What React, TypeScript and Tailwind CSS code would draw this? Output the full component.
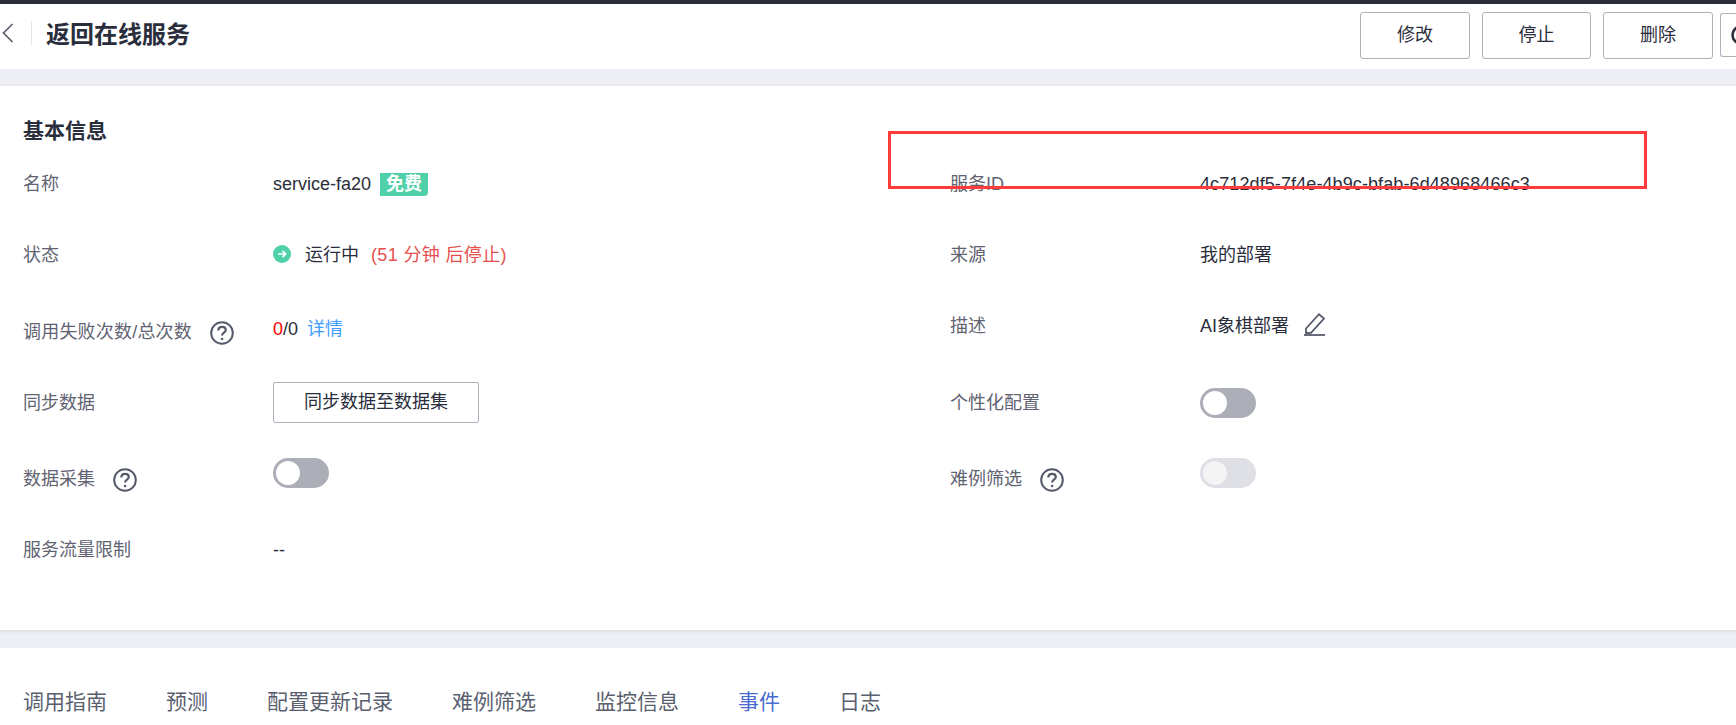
const font = "font-['Liberation_Sans','Noto_Sans_CJK_SC',sans-serif]";

function Help() {
  return (
    <svg width="24" height="24" viewBox="0 0 24 24" fill="none" stroke="#565b6b" strokeWidth="2" className="ml-[18px] shrink-0">
      <circle cx="12" cy="12" r="10.8" />
      <path d="M8.3 9.4c0-2.2 1.7-3.6 3.8-3.6s3.7 1.3 3.7 3.2c0 2.6-3.7 2.7-3.7 5.4" strokeWidth="2.2" />
      <circle cx="12.1" cy="18" r="1.3" fill="#565b6b" stroke="none" />
    </svg>
  );
}

function Toggle({ disabled, raised }: { disabled?: boolean; raised?: boolean }) {
  return (
    <div className={`flex h-[30px] w-[56px] items-center rounded-full px-[3px] ${raised ? "mb-[12px]" : ""} ${disabled ? "bg-[#dfe0e6]" : "bg-[#adafb8]"}`}>
      <div className={`h-[24px] w-[24px] rounded-full ${disabled ? "bg-[#f4f4f5]" : "bg-white"}`} />
    </div>
  );
}

function Row({ label, help, labelClass, spanClass, children }: { label: string; help?: boolean; labelClass?: string; spanClass?: string; children?: React.ReactNode }) {
  return (
    <div className="flex items-center">
      <div className={`flex items-center text-[#5f6372] ${labelClass ?? "w-[250px]"}`}>
        <span className={spanClass}>{label}</span>
        {help && <Help />}
      </div>
      <div className="flex items-center text-[#2a2e3c]">{children}</div>
    </div>
  );
}

const tabs = ["调用指南", "预测", "配置更新记录", "难例筛选", "监控信息", "事件", "日志"];

export default function App() {
  return (
    <div className={`relative h-[725px] w-[1736px] overflow-hidden bg-[#eeeff4] text-[18px] ${font}`}>
      <div className="h-[4px] bg-[#2a2c37]" />
      <header className="flex h-[65px] items-center overflow-hidden bg-white pb-[3px]">
        <svg width="12" height="20" viewBox="0 0 12 20" fill="none" stroke="#5b6070" strokeWidth="1.7" className="mb-[4px] ml-[2px] shrink-0">
          <path d="M10.5 1 1.5 10l9 9" />
        </svg>
        <div className="mb-[4px] ml-[17px] h-[24px] w-px bg-[#e3e3e6]" />
        <h1 className="ml-[14px] text-[24px] font-bold text-[#2a2e3c]">返回在线服务</h1>
        <div className="ml-auto flex shrink-0 items-center">
          <button className="flex h-[47px] w-[110px] items-center justify-center rounded-[3px] border border-[#b0b1bc] text-[#2a2e3c]">修改</button>
          <button className="ml-[12px] flex h-[47px] w-[109px] items-center justify-center rounded-[3px] border border-[#b0b1bc] text-[#2a2e3c]">停止</button>
          <button className="ml-[12px] flex h-[47px] w-[110px] items-center justify-center rounded-[3px] border border-[#b0b1bc] text-[#2a2e3c]">删除</button>
          <div className="ml-[7px] flex h-[44px] w-[16px] items-center overflow-hidden rounded-l-[3px] border-y border-l border-[#b0b1bc] pl-[10px]">
            <svg width="20" height="20" viewBox="0 0 20 20" fill="none" stroke="#2a2e3c" strokeWidth="2.6" className="shrink-0">
              <circle cx="10" cy="10" r="8.5" />
            </svg>
          </div>
        </div>
      </header>

      <section className="mt-[17px] h-[544px] bg-white pt-[31px] pr-[22px] pl-[23px] shadow-[0_1px_4px_rgba(0,0,0,0.1)]">
        <h2 className="h-[30px] text-[21px] leading-[28px] font-bold text-[#2a2e3c]">基本信息</h2>
        <div className="grid grid-cols-[927px_1fr] grid-rows-[74px_68px_84px_60px_92px_50px]">
          <Row label="名称">
            <span>service-fa20</span>
            <span className="ml-[9px] flex h-[23px] w-[48px] items-center justify-center rounded-br-[4px] bg-[#50d0a8] font-bold text-white">免费</span>
          </Row>
          <Row label="服务ID"><span className="tracking-[0.1px]">4c712df5-7f4e-4b9c-bfab-6d48968466c3</span></Row>

          <Row label="状态">
            <svg width="18" height="18" viewBox="0 0 18 18" fill="none" className="mb-[3px] shrink-0">
              <circle cx="9" cy="9" r="9" fill="#50d0a8" />
              <path d="M5 9h7.5M9.5 5.8 12.7 9l-3.2 3.2" stroke="#fff" strokeWidth="1.7" />
            </svg>
            <span className="ml-[14px]">运行中</span>
            <span className="ml-[12px] tracking-[0.35px] text-[#e8504f]">(51 分钟 后停止)</span>
          </Row>
          <Row label="来源"><span>我的部署</span></Row>

          <Row label="调用失败次数/总次数" help labelClass="mt-[3px] w-[250px]" spanClass="tracking-[0.2px]">
            <span className="mb-[4px] text-[#ff0000]">0</span>
            <span className="mb-[4px]">/0</span>
            <span className="mb-[4px] ml-[9px] text-[#409eff]">详情</span>
          </Row>
          <Row label="描述" labelClass="mb-[10px] w-[250px]">
            <span className="mb-[10px]">AI象棋部署</span>
            <svg width="23" height="24" viewBox="0 0 23 24" fill="none" stroke="#565b6b" strokeWidth="1.8" className="mb-[14px] ml-[14px] shrink-0">
              <path d="M3 16.5 16 2.2l5 4.4-13 14.2-5 .2z" />
              <path d="M1 23h21" />
            </svg>
          </Row>

          <Row label="同步数据">
            <button className="mb-[2px] flex h-[41px] w-[206px] items-center justify-center rounded-[2px] border border-[#b0b1bc]">同步数据至数据集</button>
          </Row>
          <Row label="个性化配置"><Toggle /></Row>

          <Row label="数据采集" help labelClass="mt-[1px] w-[250px]"><Toggle raised /></Row>
          <Row label="难例筛选" help labelClass="mt-[1px] w-[250px]"><Toggle disabled raised /></Row>

          <Row label="服务流量限制"><span>--</span></Row>
          <div />
        </div>
      </section>

      <nav className="mt-[18px] flex h-[77px] items-center gap-[59px] bg-white pt-[30px] pl-[23px] text-[21px] text-[#5a5f70]">
        {tabs.map((t) => (
          <span key={t} className={t === "事件" ? "text-[#4a6bd0]" : ""}>{t}</span>
        ))}
      </nav>

      <div className="pointer-events-none absolute top-[131px] left-[888px] h-[58px] w-[759px] border-[3px] border-[#ff3b3b]" />
    </div>
  );
}
